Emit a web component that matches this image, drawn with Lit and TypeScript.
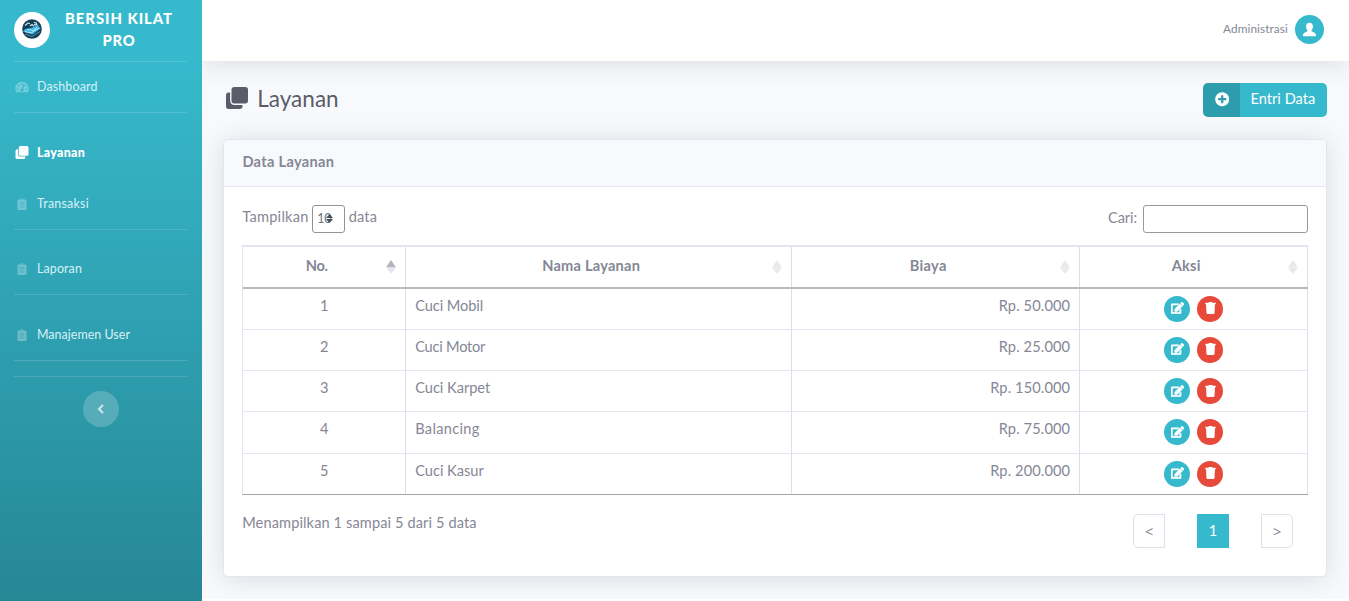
import { LitElement, html, css, svg } from "lit";
import { customElement, property } from "lit/decorators.js";

const icons: Record<string, { box: string; body: unknown }> = {
  clone: { box: "0 0 512 512", body: svg`<path d="M192 0h256a64 64 0 0 1 64 64v256a64 64 0 0 1-64 64H192a64 64 0 0 1-64-64V64a64 64 0 0 1 64-64zM64 128h32v192a96 96 0 0 0 96 96h192v32a64 64 0 0 1-64 64H64a64 64 0 0 1-64-64V192a64 64 0 0 1 64-64z"/>` },
  plus: { box: "0 0 512 512", body: svg`<path d="M256 8C119 8 8 119 8 256s111 248 248 248 248-111 248-248S393 8 256 8zm144 276c0 6.600-5.400 12-12 12h-92v92c0 6.600-5.400 12-12 12h-56c-6.600 0-12-5.400-12-12v-92h-92c-6.600 0-12-5.400-12-12v-56c0-6.600 5.400-12 12-12h92v-92c0-6.600 5.400-12 12-12h56c6.600 0 12 5.400 12 12v92h92c6.600 0 12 5.400 12 12v56z"/>` },
  trash: { box: "0 0 448 512", body: svg`<path d="M432 32H312l-9.400-18.700A24 24 0 0 0 281.100 0H166.800a23.720 23.720 0 0 0-21.400 13.300L136 32H16A16 16 0 0 0 0 48v32a16 16 0 0 0 16 16h416a16 16 0 0 0 16-16V48a16 16 0 0 0-16-16zM53.200 467a48 48 0 0 0 47.900 45h245.800a48 48 0 0 0 47.900-45L416 90H32z"/>` },
  edit: { box: "0 0 576 512", body: svg`<path stroke="currentColor" stroke-width="22" d="M402.600 83.200l90.200 90.200c3.800 3.800 3.800 10 0 13.800L274.400 405.600l-92.800 10.300c-12.400 1.400-22.900-9.100-21.500-21.500l10.300-92.800L388.800 83.200c3.800-3.800 10-3.800 13.800 0zm162-22.900l-48.800-48.800c-15.200-15.200-39.900-15.200-55.200 0l-35.400 35.400c-3.800 3.800-3.800 10 0 13.800l90.200 90.200c3.800 3.800 10 3.800 13.800 0l35.400-35.400c15.200-15.300 15.200-40 0-55.200zM384 346.200V448H64V128h229.800c3.200 0 6.200-1.300 8.500-3.500l40-40c7.600-7.600 2.200-20.500-8.500-20.500H48C21.500 64 0 85.500 0 112v352c0 26.500 21.500 48 48 48h352c26.500 0 48-21.500 48-48V306.200c0-10.700-12.900-16-20.500-8.500l-40 40c-2.200 2.300-3.500 5.300-3.500 8.500z"/>` },
  clipboard: { box: "0 0 384 512", body: svg`<path fill-rule="evenodd" d="M336 64h-80a64 64 0 0 0-128 0H48a48 48 0 0 0-48 48v352a48 48 0 0 0 48 48h288a48 48 0 0 0 48-48V112a48 48 0 0 0-48-48zM192 40a24 24 0 1 1 0 48 24 24 0 0 1 0-48zM96 196h192v24H96zM96 284h192v24H96zM96 372h192v24H96z"/>` },
  gauge: { box: "0 0 576 512", body: svg`<path fill-rule="evenodd" d="M288 32C129 32 0 161 0 320c0 53 14 102 39 145 6 10 16 15 27 15h444c11 0 21-5 27-15a288 288 0 0 0 39-145C576 161 447 32 288 32zm0 64a32 32 0 1 1 0 64 32 32 0 0 1 0-64zM96 384a32 32 0 1 1 0-64 32 32 0 0 1 0 64zm48-160a32 32 0 1 1 0-64 32 32 0 0 1 0 64zm247-52-61 184c24 16 31 38 19 76H227c-18-48 13-94 58-95l61-184c12-27 54-14 45 19zm21 26a32 32 0 1 1 20 26c-10 0-18-4-24-11zm68 186a32 32 0 1 1 0-64 32 32 0 0 1 0 64z"/>` },
  left: { box: "0 0 10 12", body: svg`<path d="M7 2 3 6l4 4" fill="none" stroke="currentColor" stroke-width="2.100"/>` },
  user: { box: "0 0 16 16", body: svg`<path d="M8 .8c-2.400 0-3.700 1.700-3.700 4 0 1.700.700 3.200 1.700 4.100-.1 1-.8 1.500-2.300 2.100C1.900 11.700 1.200 12.700 1 14.200c0 .6.400 1 1 1h12c.6 0 1-.4 1-1-.2-1.500-.9-2.500-2.700-3.200-1.500-.6-2.200-1.100-2.300-2.100 1-.9 1.700-2.400 1.700-4.100 0-2.300-1.300-4-3.700-4z"/>` },
  logo: { box: "0 0 20 20", body: svg`<circle cx="10" cy="10" r="9.800" fill="#173e58"/><path d="M3 6.500 6 4l2 .5M12 3.200l2.500 1 .5 2-3-.8M8 7l2-1.500 2 1.800" fill="none" stroke="#d6eef5" stroke-width="1.100"/><path d="M1 12.500 3 10l6-1 7-3 2.500 3.500-8 6z" fill="#38b4e4"/><path d="m3 12.500 6 1.500 8-5M5 10.500l6 .8 4-2.800" fill="none" stroke="#c7f0fb" stroke-width=".9"/><path d="m3 15 7 2.500 8-5" fill="none" stroke="#67abc2" stroke-width=".8"/>` },
};

@customElement("ui-icon")
class UiIcon extends LitElement {
  @property() name = "clone";
  static styles = css`
    :host { display: inline-flex; flex: none; }
    svg { width: 100%; height: 100%; display: block; fill: currentColor; }
  `;
  render() {
    const i = icons[this.name];
    return html`<svg viewBox=${i.box}>${i.body}</svg>`;
  }
}

/* Single-line label whose tracking is derived from its advance width. */
@customElement("ui-text")
class UiText extends LitElement {
  @property({ type: Number }) w = 0;
  @property() text = "";
  static styles = css`
    :host { display: inline-block; white-space: nowrap; flex: none; }
    .label { display: inline-block; }
  `;
  render() { return html`<span class="label">${this.text}</span>`; }
  updated() {
    const el = this.renderRoot.querySelector(".label") as HTMLElement;
    el.style.letterSpacing = "0px";
    const gap = (this.w - el.getBoundingClientRect().width) / this.text.length;
    el.style.letterSpacing = `${gap}px`;
  }
}

const t = (text: string, w: number) => html`<ui-text .text=${text} .w=${w}></ui-text>`;

const rows: [string, number, string, number][] = [
  ["Cuci Mobil", 68, "Rp. 50.000", 71.500],
  ["Cuci Motor", 70, "Rp. 25.000", 71.500],
  ["Cuci Karpet", 75, "Rp. 150.000", 80],
  ["Balancing", 64.500, "Rp. 75.000", 71.500],
  ["Cuci Kasur", 68.500, "Rp. 200.000", 80],
];

@customElement("app-root")
class AppRoot extends LitElement {
  static styles = css`
    :host { display: flex; height: 601px; overflow: hidden; background: #f8f9fc; color: #858796; font: 14.600px/22px Lato, "Noto Sans", sans-serif; }
    * { box-sizing: border-box; }
    .side { width: 201.600px; flex: none; position: relative; z-index: 1; padding: 0 14.400px; color: #d7f1f5; background: linear-gradient(180deg, #36b9cc 10%, #258391 100%); height: 640px; font-size: 12.400px; }
    .brand { height: 61px; display: flex; align-items: center; color: #fff; font-size: 14.800px; font-weight: 900; }
    .logo { width: 36px; height: 36px; border-radius: 50%; background: #fff; display: flex; align-items: center; justify-content: center; margin: -2px 0 0 -.5px; }
    .logo ui-icon { width: 20px; height: 20px; margin-top: -1px; }
    .name { flex: 1; display: flex; flex-direction: column; align-items: center; margin: -3px 0 0 1px; }
    .line { height: 1px; background: rgba(255,255,255,.15); }
    .nav { height: 50px; display: flex; align-items: center; gap: 8px; padding-left: .6px; }
    .nav ui-icon { width: 14px; height: 12px; color: rgba(255,255,255,.3); }
    .nav.on { color: #fff; font-weight: 900; }
    .nav.on ui-icon { color: #fff; height: 13px; margin-top: -1px; }
    .g1 { margin-top: 15px; }
    .g2 { margin-top: 1px; }
    .g3 { margin-top: 14px; }
    .g4 { margin-top: 15px; }
    .toggle { width: 36px; height: 36px; margin: 14px auto 0; border-radius: 50%; background: rgba(255,255,255,.2); color: rgba(255,255,255,.7); display: flex; align-items: center; justify-content: center; }
    .toggle ui-icon { width: 10px; height: 12px; }
    .main { flex: 1; min-width: 0; display: flex; flex-direction: column; }
    .top { height: 61px; flex: none; background: #fff; box-shadow: 0 2px 25px rgba(58,59,69,.15); display: flex; align-items: center; justify-content: flex-end; gap: 7px; padding: 0 25px 2px 0; font-size: 11.800px; }
    .top ui-text { margin-top: -1px; }
    .avatar { width: 29px; height: 29px; border-radius: 50%; background: #36b9cc; color: #fff; display: flex; align-items: center; justify-content: center; }
    .avatar ui-icon { width: 15px; height: 15px; }
    .body { padding: 22px 22px 0 21.600px; height: 538px; flex: none; }
    .head { height: 34px; display: flex; align-items: center; justify-content: space-between; color: #5a5c69; }
    .title { display: flex; align-items: center; gap: 9px; font-size: 22.500px; padding-left: 3px; margin-top: -4px; }
    .title ui-text { margin-top: 1px; }
    .title ui-icon { width: 22px; height: 22px; }
    .add { height: 34px; width: 124px; border-radius: 5px; background: #36b9cc; color: #fff; display: flex; align-items: center; overflow: hidden; margin-right: -.4px; }
    .add ui-text { margin-top: -3px; }
    .plus { width: 37px; height: 34px; background: rgba(0,0,0,.15); display: flex; align-items: center; justify-content: center; margin-right: 10px; }
    .plus ui-icon { width: 14.400px; height: 14.400px; margin-top: -1px; }
    .card { height: 438px; margin-top: 22px; background: #fff; border: 1px solid #e3e6f0; border-radius: 5px; box-shadow: 0 2px 25px rgba(58,59,69,.15); }
    .chead { height: 47px; background: #f8f9fc; border-bottom: 1px solid #e3e6f0; padding: 11px 18.200px; font-weight: 700; border-radius: 5px 5px 0 0; }
    .cbody { padding: 18px 18px 0 18px; }
    .tools { height: 28px; display: flex; justify-content: space-between; align-items: center; }
    .grp { display: flex; align-items: center; gap: 3.500px; }
    .grp > ui-text { margin-top: -5px; }
    .grp.find { gap: 6px; }
    .grp.find > ui-text { margin-top: -3px; }
    .select { width: 33px; height: 28px; border: 1px solid #949494; border-radius: 3px; display: flex; align-items: center; padding-left: 4px; font-size: 12.500px; color: #6e707e; }
    .select svg { width: 7px; height: 9px; margin: -1px 0 0 -5px; fill: #4b4f5a; }
    .select ui-text { margin-top: -1px; }
    .input { width: 165px; height: 28px; border: 1px solid #999; border-radius: 3px; background: #fff; padding: 4px; }
    .table { margin-top: 12px; border-top: 2px solid #e3e6f0; border-left: 1px solid #e3e6f0; border-bottom: 1px solid #a5a6ab; width: 1066px; }
    .row { display: grid; grid-template-columns: 163px 386px 288px 228px; height: 41.300px; }
    .row + .row { border-top: 1px solid #e3e6f0; }
    .cell { border-right: 1px solid #dddfe8; padding: 6px 9px 0; }
    .row.th { height: 41.500px; border-bottom: 2px solid #b9bac0; font-weight: 700; }
    .row.th + .row { border-top: 0; height: 40.300px; }
    .th .cell { display: flex; justify-content: center; align-items: center; padding: 0 9px 0 0; }
    .th .cell ui-text { margin: -1px auto 0; position: relative; left: 2px; }
    .c { text-align: center; }
    .r { text-align: right; }
    .cell.acts { display: flex; justify-content: center; gap: 7px; padding-top: 7px; }
    .act { width: 26px; height: 26px; border-radius: 50%; color: #fff; background: #36b9cc; display: flex; align-items: center; justify-content: center; }
    .act.del { background: #e74a3b; }
    .act ui-icon { width: 13px; height: 12px; margin-top: -1px; }
    .sort { width: 10px; height: 14px; fill: #e9e9ed; flex: none; }
    .sort .hot { fill: #b3b3be; }
    .foot { display: flex; justify-content: space-between; padding: 17px 15px 0 0; }
    .pages { display: flex; gap: 32px; padding-top: 2px; }
    .page { width: 32px; height: 34px; border: 1px solid #dddfeb; display: flex; align-items: center; justify-content: center; }
    .prev { border-radius: 5px 0 0 5px; font: 14.400px "Noto Sans", sans-serif; padding-top: 2px; }
    .next { border-radius: 0 5px 5px 0; font: 14.400px "Noto Sans", sans-serif; padding-top: 2px; }
    .cur { background: #36b9cc; border-color: #36b9cc; color: #fff; }
    .bottom { height: 20px; background: #fff; flex: none; position: relative; }
  `;
  nav(icon: string, label: string, w: number, cls = "") {
    return html`<div class="nav ${cls}"><ui-icon name=${icon}></ui-icon>${t(label, w)}</div>`;
  }
  th(label: string, w: number, asc = false) {
    return html`<div class="cell">${t(label, w)}<svg class="sort" viewBox="0 0 10 14"><path class=${asc ? "hot" : ""} d="M5 0 10 7.500H0z"/><path d="M0 7.500h10L5 14z"/></svg></div>`;
  }
  render() {
    return html`
      <div class="side">
        <div class="brand"><div class="logo"><ui-icon name="logo"></ui-icon></div><div class="name">${t("BERSIH KILAT", 108)}${t("PRO", 33)}</div></div>
        <div class="line"></div>
        ${this.nav("gauge", "Dashboard", 60.500)}
        <div class="line"></div>
        ${this.nav("clone", "Layanan", 48, "on g1")}
        ${this.nav("clipboard", "Transaksi", 52, "g2")}
        <div class="line"></div>
        ${this.nav("clipboard", "Laporan", 45, "g3")}
        <div class="line"></div>
        ${this.nav("clipboard", "Manajemen User", 93, "g4")}
        <div class="line"></div>
        <div class="line g4"></div>
        <div class="toggle"><ui-icon name="left"></ui-icon></div>
      </div>
      <div class="main">
        <div class="top">${t("Administrasi", 65)}<div class="avatar"><ui-icon name="user"></ui-icon></div></div>
        <div class="body">
          <div class="head">
            <div class="title"><ui-icon name="clone"></ui-icon>${t("Layanan", 81.500)}</div>
            <div class="add"><span class="plus"><ui-icon name="plus"></ui-icon></span>${t("Entri Data", 65)}</div>
          </div>
          <div class="card">
            <div class="chead">${t("Data Layanan", 92)}</div>
            <div class="cbody">
              <div class="tools">
                <div class="grp">${t("Tampilkan", 66.500)}<div class="select">${t("10", 14)}<svg viewBox="0 0 7 9"><path d="M3.500 0 7 4H0zM0 5h7L3.500 9z"/></svg></div>${t("data", 28.500)}</div>
                <div class="grp find">${t("Cari:", 29)}<input class="input" type="search" /></div>
              </div>
              <div class="table">
                <div class="row th">${this.th("No.", 22, true)}${this.th("Nama Layanan", 98)}${this.th("Biaya", 37)}${this.th("Aksi", 29)}</div>
                ${rows.map(([n, nw, p, pw], i) => html`<div class="row">
                  <div class="cell c">${t(String(i + 1), 8.500)}</div>
                  <div class="cell">${t(n, nw)}</div>
                  <div class="cell r">${t(p, pw)}</div>
                  <div class="cell acts"><span class="act"><ui-icon name="edit"></ui-icon></span><span class="act del"><ui-icon name="trash"></ui-icon></span></div>
                </div>`)}
              </div>
              <div class="foot">${t("Menampilkan 1 sampai 5 dari 5 data", 234.500)}
                <div class="pages"><span class="page prev">&lt;</span><span class="page cur">1</span><span class="page next">&gt;</span></div>
              </div>
            </div>
          </div>
        </div>
        <div class="bottom"></div>
      </div>`;
  }
}
